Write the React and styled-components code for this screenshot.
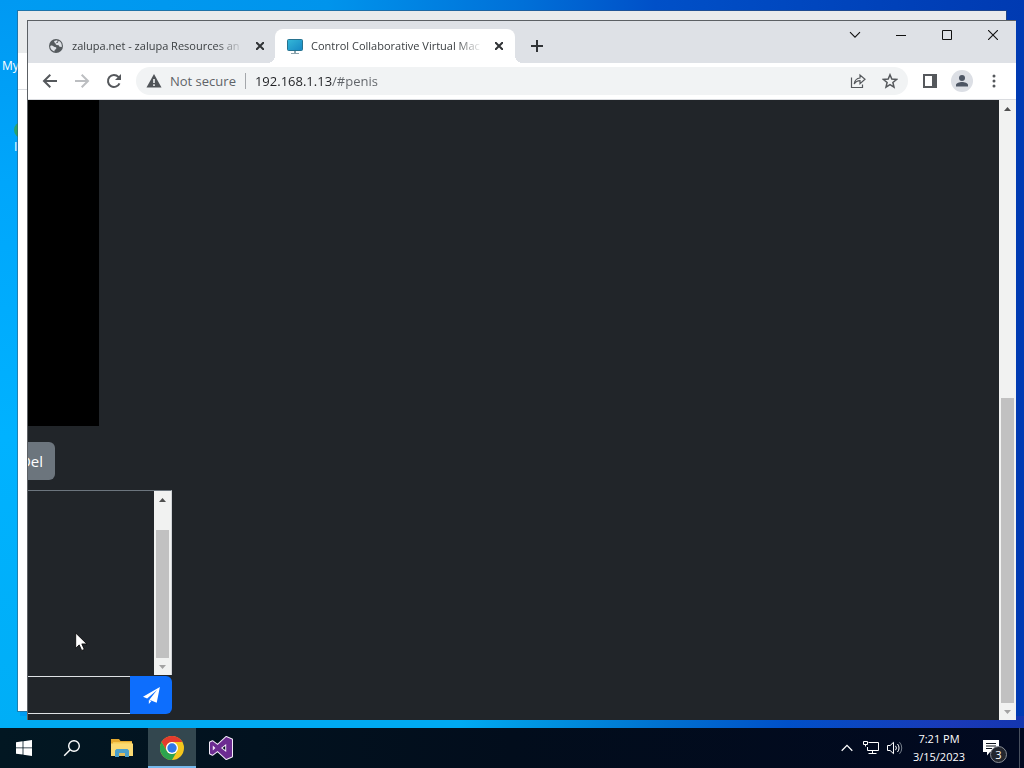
import React from "react";
import styled, { createGlobalStyle, css } from "styled-components";

const Global = createGlobalStyle`
  *, *::before, *::after { box-sizing: border-box; }
  html, body { margin: 0; height: 100%; overflow: hidden; }
  #root { height: 100%; }
  body, button, input { font-family: "Open Sans", "Noto Sans", sans-serif; }
  button { border: 0; padding: 0; background: none; color: inherit; }
  svg { display: block; flex: none; }
`;

const Screen = styled.div`
  height: 100%;
  display: flex;
  flex-direction: column;
  overflow: hidden;
`;

const Desktop = styled.main`
  position: relative;
  flex: 1;
  min-height: 0;
  overflow: hidden;
  background:
    linear-gradient(to bottom, #0099f2, #00a6fb 25%, #00b2ff 60%, #00aef6) 0 0 / 20px 100% no-repeat,
    linear-gradient(to right, #00aaf2 45%, #0096e2 52%, #0070d0 65%, #0050c8 77%, #1a3ab8 93%, #1436b0) 0 100% / 100% 12px no-repeat,
    linear-gradient(to right, #009cf2, #0094ec 32%, #0070d8 51%, #0050c8 64%, #0040b8 89%, #003ab2);
`;

const DesktopLabel = styled.span`
  position: absolute;
  left: ${(p) => p.$x}px;
  top: ${(p) => p.$y}px;
  color: #fff;
  font-size: 12px;
  line-height: 16px;
  white-space: nowrap;
`;

const Shortcut = styled.div`
  position: absolute;
  left: 14px;
  top: 122px;
  width: 32px;
  height: 16px;
  border-radius: 8px;
  background: #2ba36a;
`;

const BackWindow = styled.div`
  position: absolute;
  inset: 11px 18px 17px 18px;
  background: #fff;
  box-shadow: 0 0 0 1px rgba(60, 80, 100, 0.5);
`;
const BackTitle = styled.div`
  height: 42px;
  background: #e9ebec;
`;
const BackToolbar = styled.div`
  height: 37px;
  border-bottom: 1px solid #dadce0;
`;

const Browser = styled.section`
  position: absolute;
  inset: 20px 8px 8px 27px;
  display: flex;
  flex-direction: column;
  border-top: 1px solid #5c6064;
  border-left: 1px solid #5c6064;
  background: #212529;
`;

const TabStrip = styled.header`
  display: flex;
  align-items: flex-end;
  height: 42px;
  padding-left: 8px;
  background: #dee1e6;
`;

const Tab = styled.div`
  position: relative;
  display: flex;
  align-items: center;
  gap: 8px;
  width: 240px;
  height: 34px;
  padding: 0 8px 0 12px;
  color: #3c4043;
  ${(p) =>
    p.$active &&
    css`
      margin-left: -1px;
      background: #fff;
      border-radius: 8px 8px 0 0;
      &::before,
      &::after {
        content: "";
        position: absolute;
        bottom: 0;
        width: 8px;
        height: 8px;
      }
      &::before {
        left: -8px;
        background: radial-gradient(circle at 0 0, transparent 8px, #fff 8px);
      }
      &::after {
        right: -8px;
        background: radial-gradient(circle at 100% 0, transparent 8px, #fff 8px);
      }
    `}
`;

const TabTitle = styled.span`
  flex: 1;
  min-width: 0;
  overflow: hidden;
  white-space: nowrap;
  font-size: 11px;
  line-height: 16px;
  mask-image: linear-gradient(to right, #000 calc(100% - 28px), transparent);
`;

const TabButton = styled.button`
  display: grid;
  place-items: center;
  width: 16px;
  height: 16px;
  color: #303336;
`;

const NewTab = styled(TabButton)`
  width: 28px;
  height: 28px;
  margin: 0 0 3px 8px;
`;

const Captions = styled.div`
  display: flex;
  align-self: flex-start;
  margin-left: auto;
`;
const CaptionButton = styled.button`
  display: grid;
  place-items: center;
  width: 46px;
  height: 28px;
  color: #111;
`;

const Toolbar = styled.div`
  display: flex;
  align-items: center;
  gap: 4px;
  height: 37px;
  padding: 0 8px;
  background: #fff;
  border-bottom: 1px solid #dadce0;
`;

const ToolButton = styled.button`
  display: grid;
  place-items: center;
  width: 28px;
  height: 28px;
  flex: none;
  color: ${(p) => (p.$dim ? "#bcbec1" : "#55585c")};
`;

const Omnibox = styled.div`
  display: flex;
  align-items: center;
  gap: 4px;
  flex: 1;
  min-width: 0;
  height: 28px;
  margin: 0 4px;
  padding: 0 4px 0 10px;
  border-radius: 14px;
  background: #f1f3f4;
`;

const SiteInfo = styled.button`
  display: flex;
  align-items: center;
  gap: 8px;
  height: 16px;
  padding-right: 9px;
  border-right: 1px solid #a4a7ab;
  color: #5f6368;
  font-size: 13px;
  line-height: 16px;
  white-space: nowrap;
`;

const Address = styled.input`
  flex: 1;
  min-width: 0;
  height: 20px;
  padding: 0 0 0 5px;
  border: 0;
  outline: 0;
  font-size: 13px;
  line-height: 20px;
  color: transparent;
  background: linear-gradient(to right, #202124 82px, #5f6368 82px);
  background-clip: text;
`;

const Avatar = styled.span`
  display: grid;
  place-items: center;
  width: 22px;
  height: 22px;
  border-radius: 50%;
  background: #dcdfe5;
`;

const Viewport = styled.div`
  display: flex;
  flex: 1;
  min-height: 0;
`;

const Page = styled.div`
  display: flex;
  flex-direction: column;
  align-items: flex-start;
  flex: 1;
  min-width: 0;
  overflow: hidden;
  background: #212529;
`;

const Display = styled.div`
  flex: 1;
  width: 71px;
  background: #000;
`;

const Keys = styled.div`
  display: flex;
  justify-content: flex-end;
  width: 27px;
  margin: 16px 0 10px;
  overflow: hidden;
`;

const KeyButton = styled.button`
  flex: none;
  height: 38px;
  padding: 0 12px;
  border-radius: 6px;
  background: #6c757d;
  color: #fff;
  font-size: 15px;
  font-weight: 500;
  line-height: 24px;
  white-space: nowrap;
`;

const Chat = styled.div`
  display: flex;
  justify-content: flex-end;
  width: 144px;
  height: 185px;
  border-top: 1px solid #6c757d;
  border-right: 1px solid #d0d3d6;
`;

const Composer = styled.form`
  display: flex;
  width: 144px;
  height: 38px;
  margin: 1px 0 6px;
`;
const Message = styled.input`
  flex: 1;
  min-width: 0;
  border: solid #dfe2e5;
  border-width: 1px 0;
  background: #212529;
  color: #fff;
`;
const Send = styled.button`
  display: grid;
  place-items: center;
  width: 42px;
  border-radius: 0 6px 6px 0;
  background: #0d6efd;
  color: #fff;
`;

const Track = styled.div`
  display: flex;
  flex-direction: column;
  align-items: center;
  width: 17px;
  flex: none;
  background: #f1f2f1;
`;
const Arrow = styled.button`
  display: grid;
  place-items: center;
  width: 17px;
  height: 17px;
  flex: none;
  color: ${(p) => (p.$dim ? "#a3a3a3" : "#505050")};
`;
const Space = styled.div`
  flex: ${(p) => p.$grow};
`;
const Thumb = styled.div`
  flex: ${(p) => p.$grow};
  width: 13px;
  background: #c1c1c1;
`;

const Pointer = styled.div`
  position: absolute;
  left: 75px;
  top: 632px;
`;

const Taskbar = styled.footer`
  display: flex;
  height: 40px;
  flex: none;
  background: linear-gradient(to right, #021722, #020d1c 50%, #010920);
  color: #fff;
`;
const Task = styled.button`
  display: grid;
  place-items: center;
  width: ${(p) => p.$w || 49}px;
  background: ${(p) => (p.$active ? "#33474f" : "transparent")};
  box-shadow: ${(p) => (p.$active ? "inset 0 -2px #76b9ed" : "none")};
`;
const Tray = styled.div`
  display: flex;
  margin-left: auto;
`;
const Clock = styled.time`
  display: flex;
  flex-direction: column;
  justify-content: center;
  width: 64px;
  text-align: center;
  font-size: 11px;
  line-height: 18px;
`;
const Notices = styled(Task)`
  position: relative;
`;
const Count = styled.span`
  position: absolute;
  left: 19px;
  top: 18px;
  width: 17px;
  height: 17px;
  border: 1px solid #8a8e96;
  border-radius: 50%;
  background: #23272f;
  font-size: 11px;
  line-height: 15px;
  text-align: center;
`;
const ShowDesktop = styled.button`
  width: 5px;
  margin-left: 8px;
  border-left: 1px solid #48505e;
`;

const line = { fill: "none", stroke: "currentColor" };

const Cross = ({ size = 8, w = 2 }) => (
  <svg width={size} height={size} viewBox={`0 0 ${size} ${size}`} {...line} strokeWidth={w}>
    <path d={`M0 0L${size} ${size}M${size} 0L0 ${size}`} />
  </svg>
);

const Globe = () => (
  <svg width="16" height="16" viewBox="0 0 16 16">
    <circle cx="8" cy="8" r="7" fill="#555a5e" />
    <path d="M2.2 8.5C2.4 7.4 3.2 7.5 4.1 7.6L6.6 9.1 8.2 9.2V11L6.8 11.7 6.3 13.4C3.8 12.6 2.2 10.8 2.2 8.5Z" fill="#dee1e6" />
    <path d="M6 3.1L9.1 2.2 9.7 3.3 8.3 4.4 7.5 5.9 8.5 7.1 10.7 7.2 11.5 8.7 13.8 9.1C14.2 6.5 13 3.9 10.7 2.8L9.6 5.1 6.9 5.3Z" fill="#dee1e6" />
  </svg>
);

const Monitor = () => (
  <svg width="16" height="16" viewBox="0 0 16 16">
    <defs>
      <linearGradient id="screen" x1="0" y1="0" x2="1" y2="1">
        <stop offset="0" stopColor="#35b8d8" />
        <stop offset="1" stopColor="#1687c4" />
      </linearGradient>
    </defs>
    <rect x=".5" y="1.5" width="15" height="11" rx="1" fill="url(#screen)" stroke="#27728f" />
    <path d="M7 13h2v2h3v1H4v-1h3z" fill="#8da4ad" />
  </svg>
);

const ArrowIcon = ({ flip }) => (
  <svg width="16" height="16" viewBox="0 0 16 16" {...line} strokeWidth="2" transform={flip ? "rotate(180)" : undefined}>
    <path d="M15 8H2.5M8.3 1.8L2 8l6.3 6.2" />
  </svg>
);

const Reload = () => (
  <svg width="16" height="16" viewBox="0 0 16 16" {...line} strokeWidth="2">
    <path d="M13.5 10.3A6 6 0 1 1 12.4 3.9L14 5.6" />
    <path d="M15 1v6H9z" fill="currentColor" stroke="none" />
  </svg>
);

const Warning = () => (
  <svg width="16" height="14" viewBox="0 0 16 14">
    <path d="M8 0l7.5 13.5H.5z" fill="#505458" />
    <path d="M7.2 5h1.6v4H7.2zM7.2 10.3h1.6v1.6H7.2z" fill="#f1f3f4" />
  </svg>
);

const Share = () => (
  <svg width="16" height="16" viewBox="0 0 16 16" {...line} strokeWidth="1.2">
    <path d="M1.5 4.5v10h11v-3M4.2 11C4.7 7.3 6.8 5.3 10 5V2l5 4.3-5 4.3V7.7C7.4 7.7 5.6 8.8 4.2 11z" />
  </svg>
);

const Star = () => (
  <svg width="16" height="16" viewBox="0 0 16 16" {...line} strokeWidth="1.5">
    <path d="M8 1.8l1.8 4.3 4.7.4-3.6 3 1.1 4.6L8 11.7l-4 2.4 1.1-4.6-3.6-3 4.7-.4z" />
  </svg>
);

const SidePanel = () => (
  <svg width="14" height="14" viewBox="0 0 14 14">
    <path d="M1 1h12v12H1z" {...line} strokeWidth="2" />
    <path d="M9 1h4v12H9z" fill="currentColor" />
  </svg>
);

const Person = () => (
  <svg width="14" height="14" viewBox="0 0 14 14" fill="#4d5664">
    <circle cx="7" cy="4" r="3" />
    <path d="M1 12.5V11c0-2 3.5-3 6-3s6 1 6 3v1.5z" />
  </svg>
);

const Dots = () => (
  <svg width="4" height="14" viewBox="0 0 4 14" fill="currentColor">
    <circle cx="2" cy="2" r="1.5" />
    <circle cx="2" cy="7" r="1.5" />
    <circle cx="2" cy="12" r="1.5" />
  </svg>
);

const Triangle = ({ down }) => (
  <svg width="7" height="4" viewBox="0 0 7 4" fill="currentColor">
    <path d={down ? "M0 0h7L3.5 4z" : "M0 4h7L3.5 0z"} />
  </svg>
);

const Plane = () => (
  <svg width="17" height="17" viewBox="0 0 16 16" fill="currentColor">
    <path d="M15.9.1L0 9.1l3.9 1.7L13.2 2.8 6 11.9l6.9 3zM5.5 12.3V16l2.4-2.8z" />
  </svg>
);

const Windows = () => (
  <svg width="16" height="16" viewBox="0 0 16 16" fill="#fff">
    <path d="M0 2.2L6.6 1.3v6.2H0zM7.4 1.2L16 0v7.5H7.4zM0 8.3h6.6v6.3L0 13.7zM7.4 8.3H16V16l-8.6-1.2z" />
  </svg>
);

const Search = () => (
  <svg width="18" height="18" viewBox="0 0 18 18" {...line} strokeWidth="1.4">
    <circle cx="11" cy="7" r="5.3" />
    <path d="M7.2 10.8L1.2 16.8" />
  </svg>
);

const Folder = () => (
  <svg width="22" height="18" viewBox="0 0 22 18">
    <path d="M0 0h8l1.5 2H21v15H0z" fill="#e5a92f" />
    <path d="M2 3h19v3H2z" fill="#f6cb54" />
    <path d="M0 4.5h22V17H0z" fill="#fbda73" />
    <path d="M4 18v-6.5L5.5 10h11l1.5 1.5V18h-4v-4H8v4z" fill="#4a9fcb" />
    <path d="M8 14h6v3H8z" fill="#e0bd5c" />
  </svg>
);

const Chrome = () => (
  <svg width="24" height="24" viewBox="0 0 24 24">
    <circle cx="12" cy="12" r="12" fill="#f4c61d" />
    <path d="M1.6 6A12 12 0 0 1 22.4 6H12a6 6 0 0 0-5.2 9z" fill="#e33b2e" />
    <path d="M1.6 6A12 12 0 0 0 12 24l5.2-9a6 6 0 0 1-10.4 0z" fill="#2da44e" />
    <circle cx="12" cy="12" r="6" fill="#fff" />
    <circle cx="12" cy="12" r="4.7" fill="#2f78e8" />
  </svg>
);

const VisualStudio = () => (
  <svg width="24" height="24" viewBox="0 0 24 24">
    <path
      fillRule="evenodd"
      d="M17.2 1L23 3.5V20.5L17.2 23 8.6 15 3.6 18.8 1 17.6V6.4L3.6 5.2 8.6 9zM17.2 8L12 12l5.2 4zM3.8 9.4v5.2L6.4 12z"
      fill="#6c2c91"
      stroke="#f4ecf9"
      strokeWidth="2"
      strokeLinejoin="round"
      paintOrder="stroke"
    />
  </svg>
);

const Network = () => (
  <svg width="17" height="14" viewBox="0 0 17 14" {...line} strokeWidth="1">
    <path d="M5.5 1.5h10v8h-11V6M9.5 9.5v3M5.5 12.5h8M.5.5h4v3h-4zM2.5 3.5v2" />
  </svg>
);

const Volume = () => (
  <svg width="16" height="14" viewBox="0 0 16 14" {...line} strokeWidth="1">
    <path d="M.5 4.5h2.6L6.5 1.3v11.4L3.1 9.5H.5z" />
    <path d="M8.5 4.8a3.4 3.4 0 0 1 0 4.4M10.5 3a6 6 0 0 1 0 8" />
    <path d="M12.5 1.2a8.6 8.6 0 0 1 0 11.6" stroke="#77808c" />
  </svg>
);

const Note = () => (
  <svg width="16" height="16" viewBox="0 0 16 16">
    <path d="M0 0h16v12H7l-3 3.5V12H0z" fill="#fff" />
    <path d="M3 3.5h10M3 6h10M3 8.5h6" stroke="#10161f" />
  </svg>
);

const Cursor = () => (
  <svg width="13" height="20" viewBox="0 0 13 20">
    <path d="M.7 1v15.2l3.5-3.3 2.5 5.6 2.6-1.1-2.5-5.5h5z" fill="#fff" stroke="#000" strokeWidth=".8" />
  </svg>
);

const Chevron = ({ up }) => (
  <svg width="12" height="8" viewBox="0 0 12 8" {...line} strokeWidth={up ? 1.3 : 1.1}>
    <path d={up ? "M.7 6.7L6 1.4l5.3 5.3" : "M1 1.2l5 5 5-5"} />
  </svg>
);

function Scrollbar({ before, thumb }) {
  return (
    <Track>
      <Arrow aria-label="Scroll up"><Triangle /></Arrow>
      <Space $grow={before} />
      <Thumb $grow={thumb} />
      <Arrow aria-label="Scroll down" $dim><Triangle down /></Arrow>
    </Track>
  );
}

function BrowserTab({ icon, title, active }) {
  return (
    <Tab $active={active}>
      {icon}
      <TabTitle>{title}</TabTitle>
      <TabButton aria-label="Close tab"><Cross /></TabButton>
    </Tab>
  );
}

export default function App() {
  return (
    <Screen>
      <Global />
      <Desktop>
        <DesktopLabel $x={2} $y={58}>My</DesktopLabel>
        <Shortcut />
        <DesktopLabel $x={14} $y={139}>I</DesktopLabel>
        <BackWindow>
          <BackTitle />
          <BackToolbar />
        </BackWindow>
        <Browser>
          <TabStrip>
            <BrowserTab icon={<Globe />} title="zalupa.net - zalupa Resources an" />
            <BrowserTab active icon={<Monitor />} title="Control Collaborative Virtual Mac" />
            <NewTab aria-label="New tab">
              <svg width="12" height="12" viewBox="0 0 12 12" {...line} strokeWidth="2">
                <path d="M6 0v12M0 6h12" />
              </svg>
            </NewTab>
            <Captions>
              <CaptionButton aria-label="Search tabs"><Chevron /></CaptionButton>
              <CaptionButton aria-label="Minimize">
                <svg width="10" height="1" viewBox="0 0 10 1"><path d="M0 0h10v1H0z" fill="currentColor" /></svg>
              </CaptionButton>
              <CaptionButton aria-label="Maximize">
                <svg width="10" height="10" viewBox="0 0 10 10" {...line}><path d="M.5.5h9v9h-9z" /></svg>
              </CaptionButton>
              <CaptionButton aria-label="Close"><Cross size={10} w={1.1} /></CaptionButton>
            </Captions>
          </TabStrip>
          <Toolbar>
            <ToolButton aria-label="Back"><ArrowIcon /></ToolButton>
            <ToolButton aria-label="Forward" $dim><ArrowIcon flip /></ToolButton>
            <ToolButton aria-label="Reload"><Reload /></ToolButton>
            <Omnibox>
              <SiteInfo><Warning />Not secure</SiteInfo>
              <Address aria-label="Address" defaultValue="192.168.1.13/#penis" spellCheck={false} />
              <ToolButton aria-label="Share"><Share /></ToolButton>
              <ToolButton aria-label="Bookmark"><Star /></ToolButton>
            </Omnibox>
            <ToolButton aria-label="Side panel"><SidePanel /></ToolButton>
            <ToolButton aria-label="Profile"><Avatar><Person /></Avatar></ToolButton>
            <ToolButton aria-label="Menu"><Dots /></ToolButton>
          </Toolbar>
          <Viewport>
            <Page>
              <Display />
              <Keys><KeyButton>Ctrl+Alt+Del</KeyButton></Keys>
              <Chat><Scrollbar before={22} thumb={128} /></Chat>
              <Composer onSubmit={(e) => e.preventDefault()}>
                <Message aria-label="Message" />
                <Send aria-label="Send"><Plane /></Send>
              </Composer>
            </Page>
            <Scrollbar before={281} thumb={305} />
          </Viewport>
        </Browser>
        <Pointer><Cursor /></Pointer>
      </Desktop>
      <Taskbar>
        <Task $w={48} aria-label="Start"><Windows /></Task>
        <Task $w={48} aria-label="Search"><Search /></Task>
        <Task $w={52} aria-label="File Explorer"><Folder /></Task>
        <Task $w={48} $active aria-label="Chrome"><Chrome /></Task>
        <Task aria-label="Visual Studio"><VisualStudio /></Task>
        <Tray>
          <Task $w={24} aria-label="Hidden icons"><Chevron up /></Task>
          <Task $w={24} aria-label="Network"><Network /></Task>
          <Task $w={24} aria-label="Volume"><Volume /></Task>
          <Clock><span>7:21 PM</span><span>3/15/2023</span></Clock>
          <Notices $w={40} aria-label="Notifications"><Note /><Count>3</Count></Notices>
          <ShowDesktop aria-label="Show desktop" />
        </Tray>
      </Taskbar>
    </Screen>
  );
}
